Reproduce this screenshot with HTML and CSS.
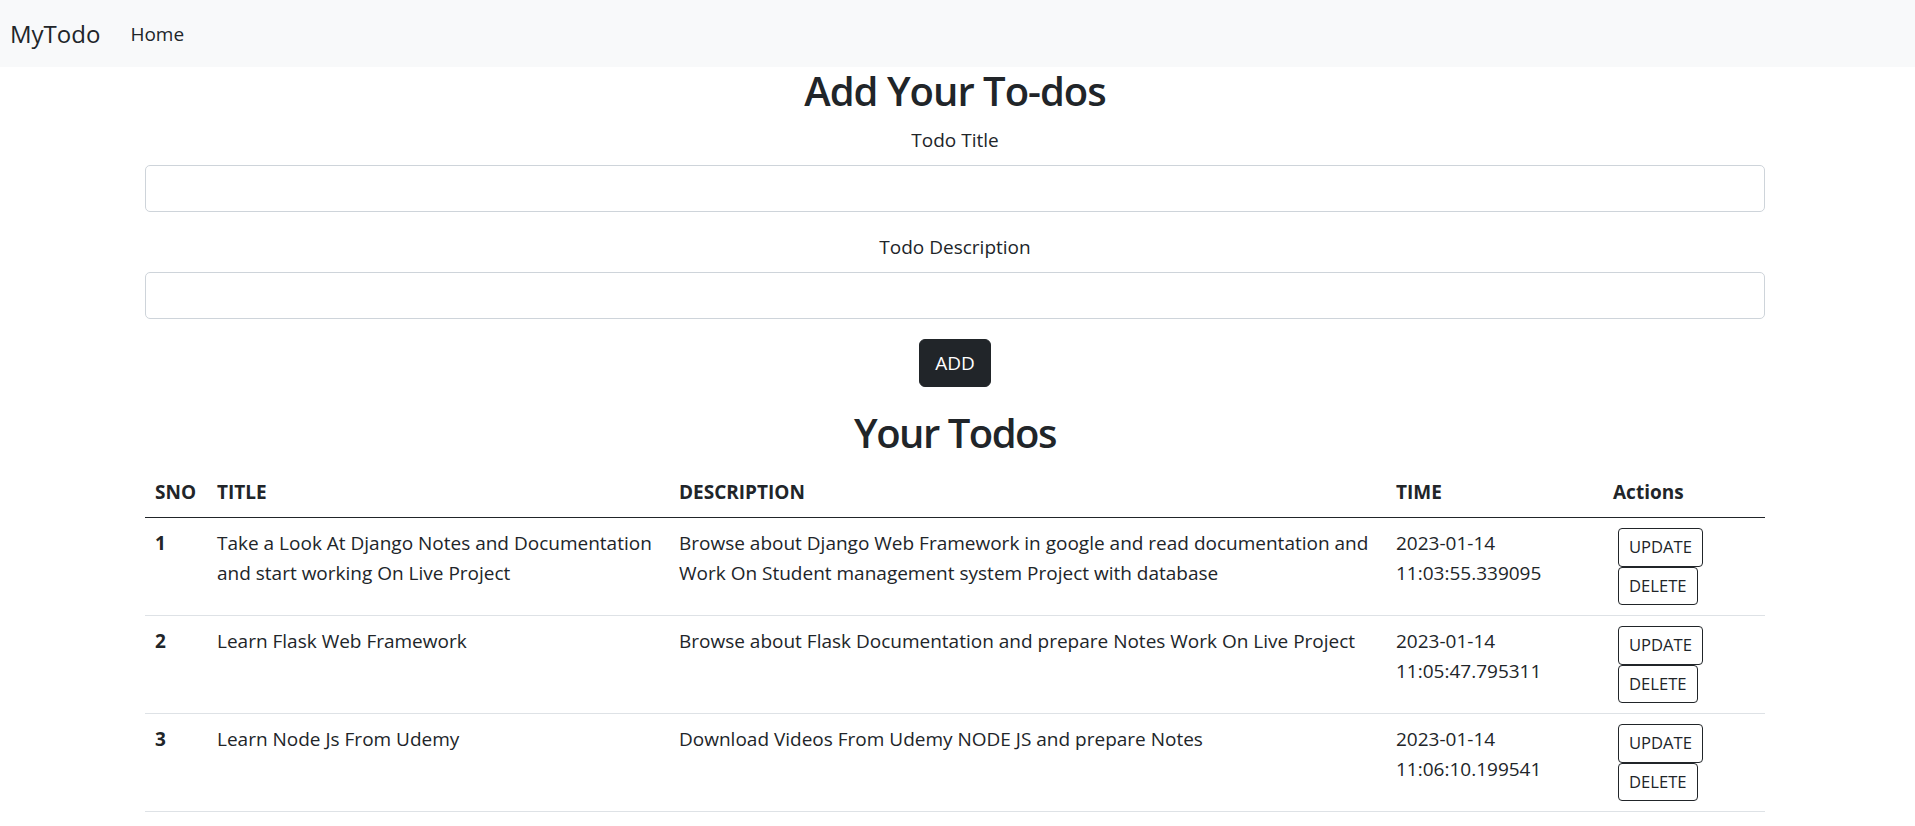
FILE: index.html
```html
<!DOCTYPE html>
<html lang="en">
<head>
<meta charset="utf-8">
<title>MyTodo</title>
<link rel="stylesheet" href="styles.css">
</head>
<body>
<nav class="navbar">
  <a class="brand" href="#">MyTodo</a>
  <a class="nav-link" href="#">Home</a>
</nav>
<main class="page">
  <div class="container">
    <h2 class="section-title">Add Your To-dos</h2>
    <form class="todo-form">
      <div class="field">
        <label class="field-label" for="title">Todo Title</label>
        <input class="form-control" type="text" id="title" name="title">
      </div>
      <div class="field">
        <label class="field-label" for="desc">Todo Description</label>
        <input class="form-control" type="text" id="desc" name="desc">
      </div>
      <div class="form-actions">
        <button class="btn btn-dark" type="button">ADD</button>
      </div>
    </form>
    <h2 class="section-title section-title-tight">Your Todos</h2>
    <table class="todos">
      <colgroup>
        <col class="col-sno">
        <col class="col-title">
        <col class="col-desc">
        <col class="col-time">
        <col class="col-actions">
      </colgroup>
      <thead>
        <tr>
          <th>SNO</th>
          <th>TITLE</th>
          <th>DESCRIPTION</th>
          <th>TIME</th>
          <th>Actions</th>
        </tr>
      </thead>
      <tbody>
        <tr>
          <th>1</th>
          <td>Take a Look At Django Notes and Documentation and start working On Live Project</td>
          <td>Browse about Django Web Framework in google and read documentation and Work On Student management system Project with database</td>
          <td>2023-01-14 11:03:55.339095</td>
          <td><div class="actions"><a class="btn-sm" href="#">UPDATE</a><a class="btn-sm" href="#">DELETE</a></div></td>
        </tr>
        <tr>
          <th>2</th>
          <td>Learn Flask Web Framework</td>
          <td>Browse about Flask Documentation and prepare Notes Work On Live Project</td>
          <td>2023-01-14 11:05:47.795311</td>
          <td><div class="actions"><a class="btn-sm" href="#">UPDATE</a><a class="btn-sm" href="#">DELETE</a></div></td>
        </tr>
        <tr>
          <th>3</th>
          <td>Learn Node Js From Udemy</td>
          <td>Download Videos From Udemy NODE JS and prepare Notes</td>
          <td>2023-01-14 11:06:10.199541</td>
          <td><div class="actions"><a class="btn-sm" href="#">UPDATE</a><a class="btn-sm" href="#">DELETE</a></div></td>
        </tr>
      </tbody>
    </table>
  </div>
</main>
</body>
</html>
```
FILE: styles.css
```css
* { box-sizing: border-box; }

body {
  margin: 0;
  font-family: "Open Sans", "Noto Sans", sans-serif;
  font-size: 19px;
  line-height: 30px;
  color: #212529;
  background: #fff;
}

a { color: inherit; text-decoration: none; }

/* Navbar */
.navbar {
  display: flex;
  align-items: center;
  height: 67px;
  padding: 0 10px;
  background: #f8f9fa;
}
.brand {
  font-size: 24px;
  line-height: 36px;
  margin-right: 30px;
  color: #212529;
}
.nav-link {
  font-size: 19px;
  line-height: 30px;
  color: #212529;
}

/* Page */
.page { padding-right: 5px; }
.container {
  max-width: 1620px;
  margin: 0 auto;
}

.section-title {
  margin: 0 0 10px;
  text-align: center;
  font-size: 40px;
  line-height: 48px;
  font-weight: 600;
  letter-spacing: -1px;
}
.section-title-tight { letter-spacing: -1.5px; }

.todo-form { text-align: center; }
.field { margin-bottom: 20px; }
.field-label {
  display: block;
  margin-bottom: 10px;
  line-height: 30px;
}
.form-control {
  display: block;
  width: 100%;
  height: 47px;
  padding: 7px 15px;
  font: inherit;
  color: #212529;
  background: #fff;
  border: 1px solid #ced4da;
  border-radius: 5px;
}

.form-actions { margin-bottom: 22px; }
.btn {
  display: inline-block;
  font: inherit;
  line-height: 30px;
  padding: 8px 15px;
  border-radius: 6px;
  border: 1px solid transparent;
}
.btn-dark {
  background: #212529;
  border-color: #212529;
  color: #fff;
}

/* Table */
.todos {
  width: 100%;
  table-layout: fixed;
  border-collapse: collapse;
}
.col-sno { width: 62px; }
.col-title { width: 462px; }
.col-desc { width: 717px; }
.col-time { width: 217px; }
.col-actions { width: 162px; }

.todos th,
.todos td {
  padding: 10px;
  text-align: left;
  vertical-align: top;
  line-height: 30px;
}
.todos th { font-weight: 700; }
.todos thead th { border-bottom: 1px solid #212529; }
.todos tbody th,
.todos tbody td { border-bottom: 1px solid #dee2e6; }

.actions {
  display: flex;
  flex-direction: column;
  align-items: flex-start;
  margin-left: 5px;
}
.btn-sm {
  display: inline-block;
  font-size: 16.6px;
  line-height: 26.5px;
  padding: 5px 10px;
  border: 1px solid #212529;
  border-radius: 4px;
  color: #212529;
}
```
